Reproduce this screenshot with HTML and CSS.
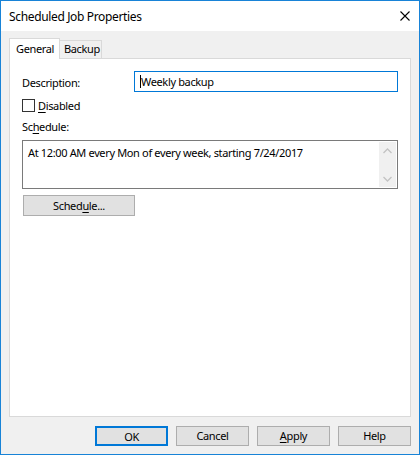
FILE: index.html
```html
<!DOCTYPE html>
<html>
<head>
<meta charset="utf-8">
<link rel="stylesheet" href="styles.css">
</head>
<body>
<div class="window">
  <div class="titlebar">
    <span class="title">Scheduled Job Properties</span>
    <svg class="close" width="10" height="10" viewBox="0 0 10 10"><path d="M0.5 0.5 L9.5 9.5 M9.5 0.5 L0.5 9.5" stroke="#000" stroke-width="1.1" fill="none"/></svg>
  </div>
  <div class="body">
    <div class="tabs">
      <div class="tab active">General</div>
      <div class="tab">Backup</div>
    </div>
    <div class="panel">
      <div class="row desc-row">
        <span class="label">Description:</span>
        <div class="textbox"><span class="caret"></span>Weekly backup</div>
      </div>
      <label class="check-row">
        <span class="checkbox"></span>
        <span class="label"><u>D</u>isabled</span>
      </label>
      <div class="label sched-label">Sc<u>h</u>edule:</div>
      <div class="textarea">
        <div class="ta-text">At 12:00 AM every Mon of every week, starting 7/24/2017</div>
        <div class="scrollbar">
          <svg width="9" height="6" viewBox="0 0 9 6"><path d="M0.5 5 L4.5 1 L8.5 5" stroke="#c3c3c3" stroke-width="1.3" fill="none"/></svg>
          <svg width="9" height="6" viewBox="0 0 9 6"><path d="M0.5 1 L4.5 5 L8.5 1" stroke="#c3c3c3" stroke-width="1.3" fill="none"/></svg>
        </div>
      </div>
      <button class="btn sched-btn">Sched<u>u</u>le...</button>
    </div>
    <div class="footer">
      <button class="btn default">OK</button>
      <button class="btn">Cancel</button>
      <button class="btn"><u>A</u>pply</button>
      <button class="btn">Help</button>
    </div>
  </div>
</div>
</body>
</html>
```

FILE: styles.css
```css
html, body {
  margin: 0;
  padding: 0;
  background: #f0f0f0;
}
body {
  font-family: "Noto Sans", Lato, sans-serif;
  font-size: 11px;
  letter-spacing: -0.35px;
  color: #000;
}
.window {
  box-sizing: border-box;
  width: 420px;
  height: 455px;
  border: 1px solid #1883d7;
  background: #f0f0f0;
  display: flex;
  flex-direction: column;
}
.titlebar {
  height: 30px;
  background: #fff;
  display: flex;
  align-items: center;
  justify-content: space-between;
  padding: 0 9px 0 8px;
  flex: none;
}
.title {
  font-size: 12px;
}
.close {
  display: block;
  margin-top: -1px;
}
.body {
  flex: 1;
  display: flex;
  flex-direction: column;
  padding: 7px 8px 8px 8px;
}
.tabs {
  display: flex;
  align-items: flex-end;
  height: 20px;
  position: relative;
  z-index: 1;
}
.tab {
  box-sizing: border-box;
  height: 18px;
  border: 1px solid #d9d9d9;
  border-bottom: none;
  background: #f0f0f0;
  line-height: 16px;
}
.tab.active {
  height: 21px;
  margin-bottom: -1px;
  background: #fff;
  width: 51px;
  padding: 0 0 0 6px;
  line-height: 19px;
}
.tab:not(.active) {
  width: 43px;
  padding-left: 4px;
  margin-left: -1px;
}
.panel {
  box-sizing: border-box;
  height: 359px;
  background: #fff;
  border: 1px solid #d9d9d9;
  padding: 12px 12px 0 12px;
  display: flex;
  flex-direction: column;
}
.row {
  display: flex;
  align-items: center;
}
.desc-row {
  height: 21px;
}
.desc-row .label {
  width: 112px;
  flex: none;
  position: relative;
  top: 1px;
}
.textbox {
  box-sizing: border-box;
  flex: 1;
  height: 21px;
  border: 1px solid #0078d7;
  padding: 0 5px;
  line-height: 19px;
  display: flex;
  align-items: center;
}
.caret {
  display: inline-block;
  width: 1px;
  height: 13px;
  background: #000;
}
.check-row {
  display: flex;
  align-items: center;
  margin-top: 6px;
  height: 15px;
}
.checkbox {
  box-sizing: border-box;
  width: 13px;
  height: 13px;
  border: 1px solid #333;
  background: #fff;
  margin-right: 3px;
}
.sched-label {
  margin-top: 6px;
  height: 16px;
  line-height: 16px;
}
.textarea {
  box-sizing: border-box;
  margin-top: 5px;
  height: 49px;
  border: 1px solid #7a7a7a;
  display: flex;
  justify-content: space-between;
  padding: 1px;
}
.ta-text {
  padding: 3px 0 0 4px;
  line-height: 15px;
}
.scrollbar {
  width: 17px;
  background: #f0f0f0;
  display: flex;
  flex-direction: column;
  justify-content: space-between;
  align-items: center;
  padding: 6px 0 5px;
}
.scrollbar svg {
  display: block;
}
.btn {
  box-sizing: border-box;
  font-family: inherit;
  font-size: 11px;
  letter-spacing: -0.35px;
  color: #000;
  background: #e1e1e1;
  border: 1px solid #adadad;
  height: 21px;
  padding: 0;
  line-height: 18px;
}
.sched-btn {
  margin-top: 6px;
  width: 112px;
  margin-left: 1px;
}
.footer {
  margin-top: auto;
  display: flex;
  justify-content: flex-end;
  gap: 8px;
}
.footer .btn {
  width: 73px;
  height: 20px;
}
.footer .btn.default {
  border: 2px solid #0078d7;
}
u {
  text-decoration-thickness: 1px;
  text-underline-offset: 2px;
}
```
